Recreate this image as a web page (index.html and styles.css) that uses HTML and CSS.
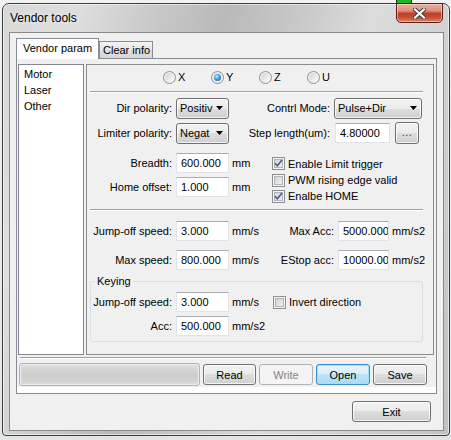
FILE: index.html
```html
<!DOCTYPE html>
<html>
<head>
<meta charset="utf-8">
<title>Vendor tools</title>
<link rel="stylesheet" href="styles.css">
</head>
<body>
<div class="desk-app"></div>
<div class="window">
  <div class="titlebar">
    <span class="title">Vendor tools</span>
    <div class="close">
      <svg width="13" height="11" viewBox="0 0 13 11"><path d="M2 1.5l9 8M11 1.5l-9 8" stroke="#3a3a3a" stroke-width="4" stroke-linecap="square" fill="none"/><path d="M2 1.5l9 8M11 1.5l-9 8" stroke="#fff" stroke-width="2.2" stroke-linecap="square" fill="none"/></svg>
    </div>
  </div>
  <div class="client">
    <div class="tabs">
      <div class="tab active">Vendor param</div>
      <div class="tab">Clear info</div>
    </div>
    <div class="pane">
      <div class="pane-body">
        <div class="main-row">
          <ul class="list">
            <li>Motor</li>
            <li>Laser</li>
            <li>Other</li>
          </ul>
          <div class="panel">
            <div class="radios">
              <label class="radio-item"><span class="rb"></span>X</label>
              <label class="radio-item"><span class="rb on"></span>Y</label>
              <label class="radio-item"><span class="rb"></span>Z</label>
              <label class="radio-item"><span class="rb"></span>U</label>
            </div>
            <div class="sep"></div>

            <div class="row row-a">
              <span class="lbl">Dir polarity:</span>
              <div class="select w53"><span class="sel-text">Positiv</span><svg width="7" height="4" viewBox="0 0 7 4"><path d="M0 0h7L3.5 4z" fill="#000"/></svg></div>
              <span class="rlbl-top">Contrl Mode:</span>
              <div class="select w88"><span class="sel-text">Pulse+Dir</span><svg width="7" height="4" viewBox="0 0 7 4"><path d="M0 0h7L3.5 4z" fill="#000"/></svg></div>
            </div>
            <div class="row row-b">
              <span class="lbl">Limiter polarity:</span>
              <div class="select w53"><span class="sel-text">Negat</span><svg width="7" height="4" viewBox="0 0 7 4"><path d="M0 0h7L3.5 4z" fill="#000"/></svg></div>
              <span class="rlbl-top step">Step length(um):</span>
              <input class="field w55" type="text" value="4.80000">
              <button class="btn dots">...</button>
            </div>
            <div class="row-c">
              <div class="col-l">
                <div class="row h22">
                  <span class="lbl">Breadth:</span>
                  <input class="field" type="text" value="600.000">
                  <span class="unit">mm</span>
                </div>
                <div class="row h22 mt2">
                  <span class="lbl">Home offset:</span>
                  <input class="field" type="text" value="1.000">
                  <span class="unit">mm</span>
                </div>
              </div>
              <div class="col-r">
                <label class="cbrow first"><span class="cb"><svg width="11" height="11" viewBox="0 0 11 11"><path d="M2 5.2l2.4 2.6L9 2" stroke="#4a5d8f" stroke-width="1.6" fill="none"/></svg></span>Enable Limit trigger</label>
                <label class="cbrow"><span class="cb"></span>PWM rising edge valid</label>
                <label class="cbrow"><span class="cb"><svg width="11" height="11" viewBox="0 0 11 11"><path d="M2 5.2l2.4 2.6L9 2" stroke="#4a5d8f" stroke-width="1.6" fill="none"/></svg></span>Enalbe HOME</label>
              </div>
            </div>
            <div class="sep sep2"></div>

            <div class="row row-d">
              <span class="lbl">Jump-off speed:</span>
              <input class="field" type="text" value="3.000">
              <span class="unit w40">mm/s</span>
              <span class="rlbl">Max Acc:</span>
              <input class="field w52" type="text" value="5000.000">
              <span class="unit">mm/s2</span>
            </div>
            <div class="row row-e">
              <span class="lbl">Max speed:</span>
              <input class="field" type="text" value="800.000">
              <span class="unit w40">mm/s</span>
              <span class="rlbl">EStop acc:</span>
              <input class="field w52" type="text" value="10000.00">
              <span class="unit">mm/s2</span>
            </div>

            <div class="group">
              <div class="group-title">Keying</div>
              <div class="row row-f">
                <span class="lbl">Jump-off speed:</span>
                <input class="field" type="text" value="3.000">
                <span class="unit w40">mm/s</span>
                <label class="cbrow inline"><span class="cb"></span>Invert direction</label>
              </div>
              <div class="row row-g">
                <span class="lbl">Acc:</span>
                <input class="field" type="text" value="500.000">
                <span class="unit">mm/s2</span>
              </div>
            </div>
          </div>
        </div>
        <div class="hsep"></div>
        <div class="actions">
          <div class="progress"></div>
          <button class="btn w53">Read</button>
          <button class="btn w54 disabled">Write</button>
          <button class="btn w54 default">Open</button>
          <button class="btn w54">Save</button>
        </div>
      </div>
    </div>
    <div class="footer">
      <button class="btn exit">Exit</button>
    </div>
  </div>
</div>
</body>
</html>
```
FILE: styles.css
```css
* { box-sizing: border-box; }
html, body { margin: 0; padding: 0; }
body {
  width: 451px;
  height: 440px;
  overflow: hidden;
  position: relative;
  background: linear-gradient(#f2f2f2, #e2e4e6);
  font-family: "Liberation Sans", Arial, sans-serif;
  font-size: 11px;
  color: #000;
}
.desk-app {
  position: absolute;
  left: 396px;
  top: -2px;
  width: 16px;
  height: 6px;
  background: #1fb51f;
  border: 1px solid #163c16;
}
.window {
  position: relative;
  z-index: 1;
  margin: 3px 0 0 2px;
  width: 448px;
  height: 433px;
  border: 1px solid #3e3e3e;
  border-radius: 7px 7px 4px 4px;
  background: linear-gradient(105deg, #d8d8d8 0%, #dedede 14%, #c8c8c8 28%, #b9b9b9 40%, #c9c9c9 54%, #dcdcdc 66%, #d2d2d2 80%, #c2c2c2 100%);
  box-shadow: inset 0 0 0 1px rgba(255,255,255,0.55);
  display: flex;
  flex-direction: column;
}
.titlebar {
  height: 28px;
  display: flex;
  justify-content: space-between;
  align-items: flex-start;
}
.title {
  margin: 6px 0 0 7px;
  font-size: 12px;
  line-height: 16px;
  color: #000;
  text-shadow: 0 0 6px rgba(255,255,255,0.9);
}
.close {
  margin: -1px 6px 0 0;
  width: 47px;
  height: 20px;
  border: 1px solid #5a1c14;
  border-radius: 0 0 5px 5px;
  background: linear-gradient(#eab0a3 0%, #dd8f7c 38%, #c2412a 52%, #c44a31 72%, #de8468 100%);
  box-shadow: inset 0 0 0 1px rgba(255,225,215,0.55);
  display: flex;
  align-items: center;
  justify-content: center;
}
.client {
  margin: 0 5px 0 6px;
  height: 399px;
  border: 1px solid #8a8a8a;
  background: #f0f0f0;
}
.tabs {
  display: flex;
  align-items: flex-end;
  height: 25px;
  padding-left: 6px;
}
.tab {
  height: 17px;
  width: 54px;
  border: 1px solid #898c95;
  border-bottom: 0;
  line-height: 16px;
  padding-left: 3px;
  text-align: left;
  background: linear-gradient(#f3f3f3, #e6e6e6 50%, #dedede 50%, #d6d6d6);
}
.tab.active {
  position: relative;
  z-index: 1;
  width: 83px;
  height: 21px;
  margin-bottom: -1px;
  padding: 0 0 2px 6px;
  line-height: 18px;
  background: #fff;
}
.pane {
  margin-left: 6px;
  width: 421px;
  height: 336px;
  border: 1px solid #898c95;
  background: #fff;
}
.pane-body {
  height: 328px;
  background: #f0f0f0;
  padding: 5px 0 0 1px;
}
.main-row {
  display: flex;
  gap: 2px;
  height: 291px;
}
.list {
  width: 66px;
  margin: 0;
  padding: 1px 0 0 5px;
  list-style: none;
  border: 1px solid #828790;
  background: #fff;
}
.list li { line-height: 16px; }
.panel {
  width: 348px;
  border: 1px solid #8c8c8c;
  display: flex;
  flex-direction: column;
}
.radios {
  height: 24px;
  display: flex;
  align-items: center;
  padding-left: 76px;
}
.radio-item {
  width: 48px;
  display: flex;
  align-items: center;
  gap: 2px;
}
.rb {
  width: 13px;
  height: 13px;
  border-radius: 50%;
  border: 1px solid #8e8f8f;
  background: linear-gradient(135deg, #d2d2d2, #fbfbfb);
  box-shadow: inset 0 0 0 1px #f2f2f2;
  display: flex;
  align-items: center;
  justify-content: center;
}
.rb.on::after {
  content: "";
  width: 7px;
  height: 7px;
  border-radius: 50%;
  background: radial-gradient(circle at 40% 35%, #c6ecff 0, #4aa6e6 40%, #11508e 100%);
}
.sep {
  margin: 2px 10px 0 3px;
  border-top: 1px solid #a0a0a0;
  border-bottom: 1px solid #fff;
}
.sep2 { margin-top: 5px; }
.row {
  display: flex;
  align-items: center;
}
.row-a { height: 22px; margin-top: 4px; }
.row-b { height: 22px; margin-top: 3px; }
.row-c { display: flex; height: 52px; margin-top: 8px; }
.row-d { height: 21px; margin-top: 9px; }
.row-e { height: 21px; margin-top: 8px; }
.row-f { height: 20px; margin-top: 4px; }
.row-g { height: 20px; margin-top: 4px; }
.h22 { height: 22px; }
.mt2 { margin-top: 2px; }
.lbl {
  width: 85px;
  margin-right: 4px;
  text-align: right;
  white-space: nowrap;
}
.group .lbl { width: 81px; }
.rlbl-top {
  width: 101px;
  margin-right: 4px;
  text-align: right;
  white-space: nowrap;
}
.rlbl-top.step { margin-right: 5px; }
.rlbl {
  width: 62px;
  margin-right: 4px;
  text-align: right;
  white-space: nowrap;
}
.unit { margin-left: 3px; white-space: nowrap; }
.unit.w40 { width: 40px; flex: none; }
.field {
  width: 53px;
  height: 20px;
  flex: none;
  margin: 0;
  padding: 0 0 0 4px;
  border: 1px solid #e2e3ea;
  border-top-color: #abadb3;
  background: #fff;
  font: inherit;
  color: #000;
  outline: none;
}
.field.w52 { width: 51px; }
.field.w55 { width: 55px; }
.select {
  height: 21px;
  flex: none;
  display: flex;
  align-items: center;
  justify-content: space-between;
  padding: 0 5px 0 3px;
  border: 1px solid #707070;
  border-radius: 3px;
  background: linear-gradient(#f2f2f2 0%, #ebebeb 50%, #dddddd 50%, #cfcfcf 100%);
  box-shadow: inset 0 0 0 1px rgba(255,255,255,0.7);
  white-space: nowrap;
  overflow: hidden;
}
.select.w53 { width: 53px; }
.select.w88 { width: 88px; padding-right: 4px; }
.col-l { width: 185px; }
.col-r { margin-top: 3px; }
.cbrow {
  display: flex;
  align-items: center;
  gap: 3px;
  height: 16px;
  white-space: nowrap;
}
.cbrow.first { height: 17px; }
.cbrow.inline { margin-left: 1px; height: 20px; }
.cb {
  width: 13px;
  height: 13px;
  flex: none;
  border: 1px solid #8e8f8f;
  background: linear-gradient(135deg, #c9ccd2, #f7f7f7);
  box-shadow: inset 0 0 0 1px #f4f4f4, inset 0 0 0 2px #b1b5ba;
  display: flex;
}
.cb svg { display: block; }
.group {
  margin: 11px 10px 0 3px;
  height: 61px;
  border: 1px solid #d5dfe5;
  border-radius: 3px;
}
.group-title {
  width: fit-content;
  margin: -7px 0 0 4px;
  padding: 0 2px;
  line-height: 13px;
  background: #f0f0f0;
}
.btn {
  font: inherit;
  color: #000;
  height: 21px;
  margin: 0;
  padding: 0;
  border: 1px solid #707070;
  border-radius: 3px;
  background: linear-gradient(#f2f2f2 0%, #ebebeb 50%, #dddddd 50%, #cfcfcf 100%);
  box-shadow: inset 0 0 0 1px rgba(255,255,255,0.75);
  display: flex;
  align-items: center;
  justify-content: center;
  flex: none;
}
.btn.dots {
  width: 24px;
  height: 22px;
  margin-left: 5px;
  color: #3a2f8a;
  letter-spacing: 0.5px;
  padding-bottom: 3px;
}
.btn.disabled {
  color: #838383;
  border-color: #adb2b5;
  background: #f4f4f4;
  box-shadow: none;
}
.btn.default {
  border-color: #3c8dc8;
  background: linear-gradient(#e8f5fc 0%, #d6eefb 50%, #bde4f8 50%, #a9dbf6 100%);
  box-shadow: inset 0 0 0 1px #9fe1fb;
}
.hsep {
  margin: 2px 10px 0 2px;
  border-top: 1px solid #a0a0a0;
  border-bottom: 1px solid #fff;
}
.actions {
  display: flex;
  align-items: center;
  height: 23px;
  margin-top: 4px;
}
.progress {
  width: 181px;
  height: 23px;
  margin-left: 1px;
  border: 1px solid #b2b2b2;
  border-radius: 3px;
  background: linear-gradient(#e6e6e6 0%, #d6d6d6 20%, #cdcdcd 55%, #d4d4d4 85%, #e2e2e2 100%);
  box-shadow: inset 0 0 0 1px #ececec;
}
.actions .btn { margin-left: 3px; }
.w53 { width: 53px; }
.w54 { width: 54px; }
.footer {
  display: flex;
  justify-content: flex-end;
  padding: 7px 12px 0 0;
}
.btn.exit { width: 79px; }
```
